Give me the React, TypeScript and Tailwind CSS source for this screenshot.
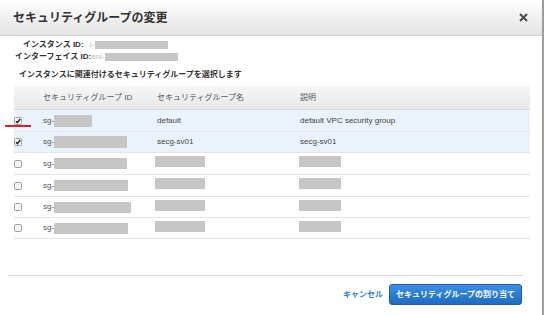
const FONT = "font-['Liberation_Sans','Noto_Sans_CJK_JP',sans-serif]";

type Row = {
  checked: boolean;
  sg: number;
  name?: string;
  desc?: string;
  h: string;
};

const ROWS: Row[] = [
  { checked: true, sg: 38, name: "default", desc: "default VPC security group", h: "h-[22px]" },
  { checked: true, sg: 73, name: "secg-sv01", desc: "secg-sv01", h: "h-[21px]" },
  { checked: false, sg: 73, h: "h-[22px]" },
  { checked: false, sg: 74, h: "h-[22px]" },
  { checked: false, sg: 77, h: "h-[21px]" },
  { checked: false, sg: 74, h: "h-[21px]" },
];

function Checkbox({ checked }: { checked: boolean }) {
  return (
    <svg width="8" height="8" viewBox="0 0 8 8" className="block">
      <rect x="0.5" y="0.5" width="7" height="7" rx="1" fill="#f2f2f2" stroke="#a0a0a0" />
      {checked && (
        <path d="M2 4.2 L3.4 5.6 L6.2 2" fill="none" stroke="#222" strokeWidth="1.4" />
      )}
    </svg>
  );
}

function Redacted({ w }: { w: string }) {
  return <span className={`inline-block h-[11px] bg-[#c6c6c6] ${w}`} />;
}

export default function App() {
  return (
    <div className={`h-[315px] w-[545px] overflow-hidden bg-white ${FONT}`}>
      <div className="flex h-full w-[544px] flex-col border-r-2 border-[#9c9c9c]">
        <div className="flex h-[36px] shrink-0 items-center justify-between border-b border-[#d2d2d2] bg-gradient-to-b from-white to-[#e3e3e3] pl-[13px] pr-[14px]">
          <span className="text-[12px] font-bold leading-none text-[#333]">セキュリティグループの変更</span>
          <svg width="9" height="9" viewBox="0 0 9 9">
            <path d="M1 1 L8 8 M8 1 L1 8" stroke="#4a4a4a" strokeWidth="2" />
          </svg>
        </div>

        <div className="pt-[3px] text-[8px] leading-[12px] text-[#333]">
          <div className="flex items-center pl-[23px]">
            <span className="font-bold">インスタンス ID:</span>
            <span className="ml-[6px] text-[#bbb]">i-</span>
            <span className="ml-[1px] inline-block h-[8px] w-[73px] bg-[#c6c6c6]" />
          </div>
          <div className="flex items-center pl-[15px]">
            <span className="font-bold">インターフェイス ID:</span>
            <span className="text-[#bbb]">eni-</span>
            <span className="inline-block h-[8px] w-[73px] bg-[#c6c6c6]" />
          </div>
          <div className="mt-[5px] pl-[19px] font-bold leading-[13px]">
            インスタンスに関連付けるセキュリティグループを選択します
          </div>
        </div>

        <div className="ml-[14px] mt-[5px] w-[516px] text-[8px] text-[#444]">
          <div className="grid h-[24px] grid-cols-[29px_114px_143px_1fr] items-center border-b border-[#dcdcdc] bg-gradient-to-b from-[#f6f6f6] to-[#e8e8e8] text-[#555]">
            <span />
            <span>セキュリティグループ ID</span>
            <span>セキュリティグループ名</span>
            <span>説明</span>
          </div>
          {ROWS.map((r, i) => (
            <div
              key={i}
              className={`relative grid grid-cols-[29px_114px_143px_1fr] items-center border-b border-[#e6e6e6] ${r.h} ${
                r.checked ? "bg-[#eaf2fc]" : "bg-white"
              }`}
            >
              <span>
                <Checkbox checked={r.checked} />
              </span>
              <span className="flex items-center text-[#555]">
                sg-
                <span className={`inline-block ${r.checked ? "h-[12px]" : "h-[11px]"} bg-[#c6c6c6]`} style={{ width: r.sg }} />
              </span>
              <span>{r.name ?? <span className="-ml-[2px] inline-block"><Redacted w="w-[50px]" /></span>}</span>
              <span>{r.desc ?? <span className="-ml-[1px] inline-block"><Redacted w="w-[42px]" /></span>}</span>
              {i === 0 && (
                <span className="absolute left-[-9px] top-[15px] h-[2px] w-[26px] bg-[#e02020]" />
              )}
            </div>
          ))}
        </div>

        <div className="ml-[8px] mt-[36px] w-[515px] border-t border-[#dedede]" />

        <div className="mt-[8px] flex items-center justify-end gap-[6px] pr-[20px]">
          <span className="text-[8px] font-bold text-[#2e80d6]">キャンセル</span>
          <button className="h-[21px] w-[133px] rounded-[3px] border border-[#1b5fae] bg-gradient-to-b from-[#3b8fe6] to-[#1c6bc4] text-[8px] font-bold text-white">
            セキュリティグループの割り当て
          </button>
        </div>
      </div>
    </div>
  );
}
